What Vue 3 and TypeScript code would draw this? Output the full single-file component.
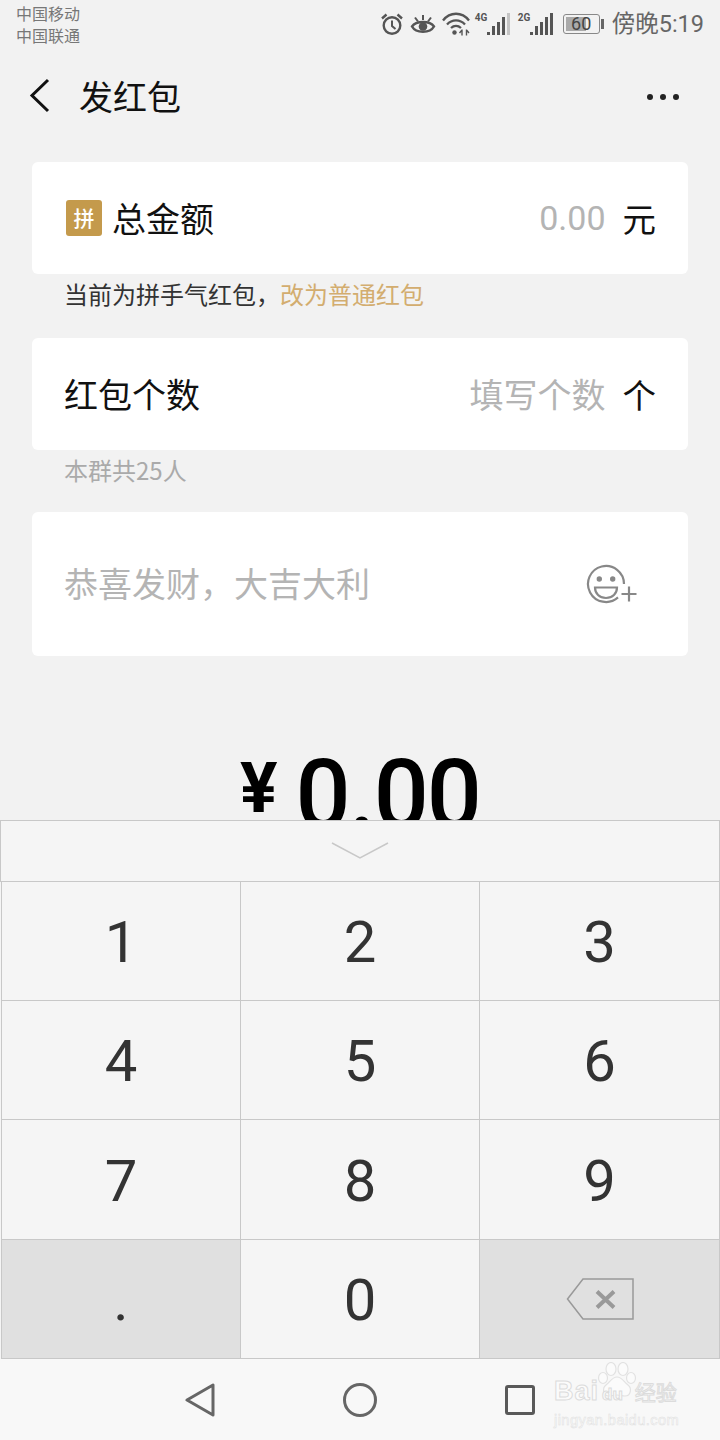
<template>
  <div class="page">
    <div class="status-bar">
      <div class="carriers">
        <span>中国移动</span>
        <span>中国联通</span>
      </div>
      <div class="status-right">
        <svg width="24" height="24" viewBox="0 0 24 24" fill="none" stroke="#555" stroke-width="2.400">
          <circle cx="12" cy="13.500" r="8.300" />
          <path d="M12 8.500v5.500l3.500 3" stroke-width="2" />
          <path d="M2 6.500 6.500 2.500M22 6.500l-4.500-4" stroke-width="2.400" />
        </svg>
        <svg class="ic-eye" width="26" height="24" viewBox="0 0 26 24" fill="none" stroke="#555" stroke-width="2.400">
          <path d="M2 14.500C6 8.500 20 8.500 24 14.500 20 21.500 6 21.500 2 14.500Z" />
          <circle cx="13" cy="14.500" r="4.300" fill="#555" stroke="none" />
          <path d="M5 5.500l3 4M21 5.500l-3 4M13 3v5" stroke-width="2" />
        </svg>
        <svg class="ic-wifi" width="28" height="24" viewBox="0 0 28 24" fill="none" stroke="#555" stroke-width="2.300">
          <path d="M1 8.500C8-.5 20-.5 27 8.500" />
          <path d="M5 12.500c5-5.500 13-5.500 18 0" />
          <path d="M9 16c3-2.700 7-2.700 10 0" />
          <circle cx="12.500" cy="20.500" r="2.200" fill="#555" stroke="none" />
          <path d="M20 17.500v6M24.500 17.500v6M17.500 21l2.500-3M27 21l-2.500-3" stroke-width="1.400" />
        </svg>
        <div class="signal">
          <span class="net">4G</span>
          <svg width="23" height="22" viewBox="0 0 23 22" fill="#555">
            <rect x="0" y="19" width="3" height="3" />
            <rect x="5" y="13" width="3" height="9" />
            <rect x="10" y="9" width="3" height="13" />
            <rect x="15" y="4" width="3" height="18" />
            <rect x="20" y="0" width="3" height="22" fill="#c4c4c4" />
          </svg>
        </div>
        <div class="signal second">
          <span class="net">2G</span>
          <svg width="23" height="22" viewBox="0 0 23 22" fill="#555">
            <rect x="0" y="19" width="3" height="3" />
            <rect x="5" y="13" width="3" height="9" />
            <rect x="10" y="9" width="3" height="13" />
            <rect x="15" y="4" width="3" height="18" />
            <rect x="20" y="0" width="3" height="22" />
          </svg>
        </div>
        <div class="battery">
          <div class="battery-body">
            <div class="battery-fill" :style="{ width: batteryFill + '%' }"></div>
            <span class="battery-num">{{ battery }}</span>
          </div>
          <div class="battery-cap"></div>
        </div>
        <span class="clock">傍晚5:19</span>
      </div>
    </div>

    <div class="nav">
      <svg class="back" width="22" height="36" viewBox="0 0 22 36" fill="none" stroke="#111" stroke-width="3">
        <path d="M19 2 3 17.500 19 33" />
      </svg>
      <span class="nav-title">发红包</span>
      <div class="more">
        <i></i><i></i><i></i>
      </div>
    </div>

    <div class="content">
      <div class="card row">
        <span class="pin">拼</span>
        <span class="label">总金额</span>
        <span class="value num">0.00</span>
        <span class="unit">元</span>
      </div>
      <div class="tip">当前为拼手气红包，<span class="link">改为普通红包</span></div>

      <div class="card row">
        <span class="label">红包个数</span>
        <span class="value">填写个数</span>
        <span class="unit">个</span>
      </div>
      <div class="tip muted">本群共25人</div>

      <div class="card message">
        <span class="placeholder">恭喜发财，大吉大利</span>
        <svg width="52" height="40" viewBox="0 0 52 40" fill="none" stroke="#888" stroke-width="2.200">
          <path d="M38 20A18 18 0 1 0 32 33.400" />
          <circle cx="13.300" cy="15" r="2.700" fill="#888" stroke="none" />
          <circle cx="26.700" cy="15" r="2.700" fill="#888" stroke="none" />
          <path d="M9 23.500h22c0 6-4.500 10.500-11 10.500s-11-4.500-11-10.500Z" />
          <path d="M35.500 30h15M43 22.500v15" />
        </svg>
      </div>

      <div class="amount">
        <span class="yen">¥</span>
        <span class="total">0.00</span>
      </div>
    </div>

    <div class="keyboard">
      <div class="collapse">
        <svg width="58" height="18" viewBox="0 0 58 18" fill="none" stroke="#c8c8c8" stroke-width="1.500">
          <path d="M1 1l28 15 28-15" />
        </svg>
      </div>
      <div class="keys">
        <div
          v-for="key in keys"
          :key="key"
          class="key"
          :class="{ dark: key === '.' || key === 'del' }"
        >
          <svg v-if="key === 'del'" width="68" height="42" viewBox="0 0 68 42" fill="none" stroke="#999">
            <path d="M1.500 21 17 1h50v40H17Z" stroke-width="1.500" />
            <path d="M31 13.500l17 16M48 13.500l-17 16" stroke-width="4" />
          </svg>
          <span v-else>{{ key }}</span>
        </div>
      </div>
    </div>

    <div class="nav-bar">
      <svg width="30" height="34" viewBox="0 0 30 34" fill="none" stroke="#666" stroke-width="3" stroke-linejoin="round">
        <path d="M28 2v30L2 17Z" />
      </svg>
      <svg width="34" height="34" viewBox="0 0 34 34" fill="none" stroke="#666" stroke-width="3">
        <circle cx="17" cy="17" r="15.500" />
      </svg>
      <svg width="30" height="30" viewBox="0 0 30 30" fill="none" stroke="#595959" stroke-width="3" stroke-linejoin="round">
        <rect x="1.500" y="1.500" width="27" height="27" rx="1.500" />
      </svg>
    </div>

    <div class="watermark">
      <svg class="paw" width="40" height="38" viewBox="0 0 40 38" fill="#fbfbfb" stroke="#e2e2e2" stroke-width="1.200">
        <ellipse cx="6" cy="16" rx="4.500" ry="5.500" />
        <ellipse cx="14" cy="7" rx="5" ry="6.500" />
        <ellipse cx="26" cy="7" rx="5" ry="6.500" />
        <ellipse cx="34" cy="16" rx="4.500" ry="5.500" />
        <path d="M20 15c5 0 7 5 11 8 4 3 3 11-3 11-3 0-5-1-8-1s-5 1-8 1c-6 0-7-8-3-11 4-3 6-8 11-8Z" />
      </svg>
      <div class="wm-main">
        <span class="wm-bai">Bai</span>
        <span class="wm-du">du</span>
        <span class="wm-cn">经验</span>
      </div>
      <div class="wm-sub">jingyan.baidu.com</div>
    </div>
  </div>
</template>

<script setup lang="ts">
const battery = 60
// the level drawn in the icon runs a bit past the number
const batteryFill = 66
const keys: string[] = ['1', '2', '3', '4', '5', '6', '7', '8', '9', '.', '0', 'del']
</script>

<style>
html,
body {
  margin: 0;
  background: #f2f2f2;
}
</style>

<style scoped>
.page {
  position: relative;
  width: 720px;
  height: 1440px;
  display: flex;
  flex-direction: column;
  overflow: hidden;
  background: #f2f2f2;
  font-family: "Noto Sans CJK SC", "Noto Sans", sans-serif;
}

.status-bar {
  height: 48px;
  display: flex;
  justify-content: space-between;
  padding: 2px 16px 0 16px;
  box-sizing: border-box;
  flex-shrink: 0;
}

.carriers {
  display: flex;
  flex-direction: column;
  font-size: 16px;
  line-height: 22px;
  color: #777;
}

.status-right {
  display: flex;
  align-items: center;
  height: 44px;
  color: #666;
}

.ic-eye,
.ic-wifi {
  margin-left: 6px;
}

.signal {
  display: flex;
  align-items: flex-start;
  margin-left: 5px;
}

.signal.second {
  margin-left: 8px;
}

.net {
  width: 12px;
  font: bold 10px/10px Roboto, sans-serif;
  color: #555;
}

.battery {
  display: flex;
  align-items: center;
  margin-left: 10px;
}

.battery-body {
  position: relative;
  width: 37px;
  height: 20px;
  padding: 2px;
  box-sizing: border-box;
  border: 1.500px solid #888;
  border-radius: 3px;
}

.battery-fill {
  height: 100%;
  background: #aaa;
}

.battery-num {
  position: absolute;
  left: 0;
  right: 0;
  top: -1px;
  text-align: center;
  font: 18px/19px Roboto, sans-serif;
  color: #444;
}

.battery-cap {
  width: 3px;
  height: 10px;
  margin-left: 1px;
  background: #666;
}

.clock {
  margin-left: 8px;
  font-size: 23.500px;
  line-height: 30px;
  color: #666;
  font-family: Roboto, "Noto Sans CJK SC", sans-serif;
}

.nav {
  height: 98px;
  flex-shrink: 0;
  box-sizing: border-box;
  display: flex;
  align-items: center;
  padding: 0 41px 2px 29px;
}

.nav-title {
  margin-left: 28px;
  padding-bottom: 2px;
  font-size: 34px;
  color: #111;
}

.more {
  margin-left: auto;
  display: flex;
  gap: 7px;
  margin-top: 2px;
}

.more i {
  width: 6px;
  height: 6px;
  border-radius: 50%;
  background: #222;
}

.content {
  flex: 1;
  min-height: 0;
  overflow: hidden;
  padding: 16px 32px 0;
}

.card {
  background: #fff;
  border-radius: 6px;
}

.row {
  height: 112px;
  display: flex;
  align-items: center;
  padding: 0 32px 0 32px;
}

.pin {
  width: 36px;
  height: 36px;
  margin: 0 10px 0 2px;
  border-radius: 3px;
  background: #c49a4c;
  color: #fff;
  font-size: 21px;
  font-weight: 500;
  line-height: 35px;
  text-align: center;
}

.label {
  padding-bottom: 2px;
  font-size: 34px;
  color: #111;
}

.value {
  margin-left: auto;
  padding-bottom: 2px;
  font-size: 34px;
  color: #b4b4b4;
}

.value.num {
  padding-bottom: 0;
  font-family: Roboto, sans-serif;
}

.unit {
  margin-left: 17px;
  padding-bottom: 2px;
  font-size: 33.500px;
  color: #111;
}

.tip {
  height: 64px;
  padding: 2px 0 0 32px;
  box-sizing: border-box;
  font-size: 24px;
  line-height: 36px;
  color: #333;
}

.tip.muted {
  height: 62px;
  color: #aaa;
}

.link {
  color: #d3ad6f;
}

.message {
  height: 144px;
  display: flex;
  align-items: center;
  justify-content: space-between;
  padding: 0 50px 0 32px;
}

.placeholder {
  padding-bottom: 3px;
  font-size: 34px;
  color: #b4b4b4;
}

.amount {
  display: flex;
  justify-content: center;
  align-items: flex-start;
  margin-top: 78px;
  color: #000;
  font-family: Roboto, sans-serif;
}

.yen {
  font-size: 70px;
  line-height: 108px;
  font-weight: 700;
}

.total {
  margin-left: 18px;
  font-size: 97px;
  line-height: 122px;
  letter-spacing: -2px;
  font-weight: 500;
}

.keyboard {
  flex-shrink: 0;
  background: #f5f5f5;
  border-top: 1px solid #c8c8c8;
}

.collapse {
  height: 60px;
  display: flex;
  align-items: center;
  justify-content: center;
  border-left: 1px solid #c8c8c8;
  border-right: 1px solid #c8c8c8;
  box-sizing: border-box;
}

.keys {
  display: grid;
  grid-template-columns: 240px 239px 240px;
  grid-template-rows: 119px 119px 120px 119px;
  padding-left: 1px;
  border-top: 1px solid #c8c8c8;
}

.key {
  display: flex;
  align-items: center;
  justify-content: center;
  padding-top: 2px;
  border-bottom: 1px solid #c8c8c8;
  border-right: 1px solid #c8c8c8;
  box-sizing: border-box;
  font: 58px/1 Roboto, sans-serif;
  color: #333;
}

.key:nth-child(3n + 1) {
  border-left: 1px solid #c8c8c8;
}

.key.dark {
  background: #e0e0e0;
}

.key.dark svg {
  margin-top: -2px;
}

.nav-bar {
  height: 81px;
  flex-shrink: 0;
  background: #f8f8f8;
  display: grid;
  grid-template-columns: 185px 30px 128px 34px 128px 30px;
  align-items: center;
}

.nav-bar svg:nth-child(1) {
  grid-column: 2;
}

.nav-bar svg:nth-child(2) {
  grid-column: 4;
}

.nav-bar svg:nth-child(3) {
  grid-column: 6;
}

.watermark {
  position: absolute;
  left: 554px;
  top: 1362px;
  width: 128px;
  color: #fbfbfb;
  -webkit-text-stroke: 1px #dcdcdc;
}

.paw {
  position: absolute;
  left: 43px;
  top: 0;
}

.wm-main {
  position: relative;
  margin-top: 15px;
  display: flex;
  align-items: baseline;
  white-space: nowrap;
}

.wm-bai {
  font: 700 27px/28px "Liberation Sans", sans-serif;
  letter-spacing: 1px;
}

.wm-du {
  margin-left: 3px;
  font: 700 17px/28px "Liberation Sans", sans-serif;
}

.wm-cn {
  margin-left: 12px;
  font: 21px/28px "Noto Sans CJK SC", sans-serif;
}

.wm-sub {
  position: relative;
  margin-top: 2px;
  font: 14.700px/18px "Liberation Sans", sans-serif;
  letter-spacing: 0.400px;
  -webkit-text-stroke: 0.500px #e0e0e0;
  white-space: nowrap;
}
</style>
